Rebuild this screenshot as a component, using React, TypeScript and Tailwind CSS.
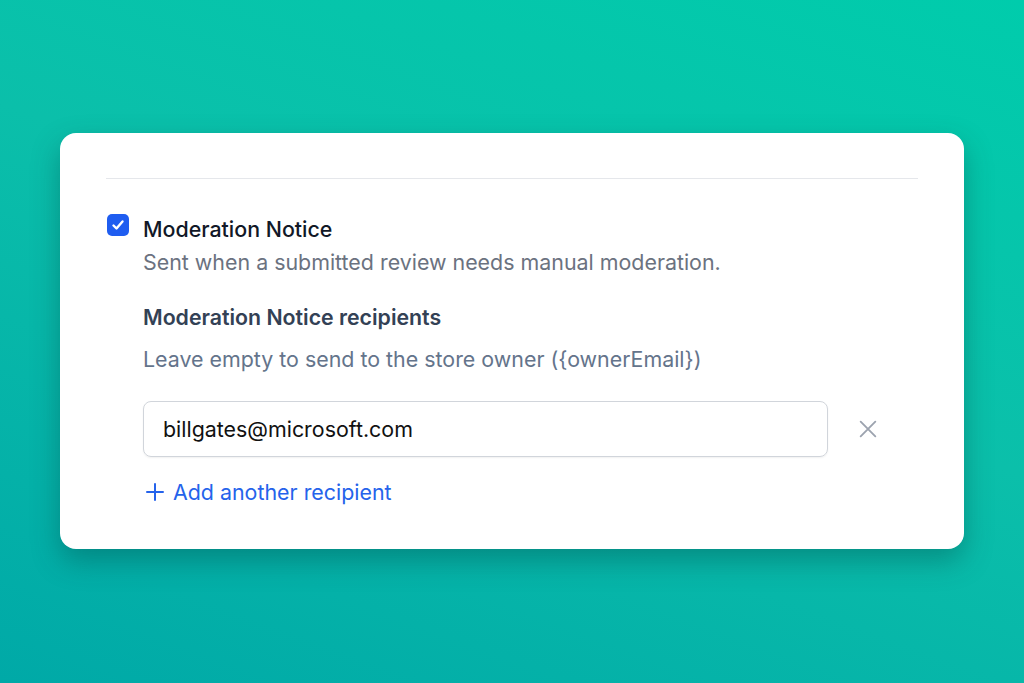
import React from "react";

export default function App() {
  return (
    <div
      className="w-[1024px] h-[683px] overflow-hidden pt-[133px] pl-[60px] bg-[linear-gradient(200deg,#00ccac_0%,#0bbfaa_45%,#00a9a7_100%)]"
      style={{ fontFamily: "Inter, 'Noto Sans', sans-serif" }}
    >
      <div className="w-[904px] bg-white rounded-[16px] shadow-[0_12px_28px_rgba(0,60,60,0.35)] px-[46px] pt-[45px] pb-[42px]">
        <div className="border-t border-[#e5e7eb]" />
        <div className="mt-[35px] flex items-start">
          <div className="ml-[1px] w-[22px] h-[22px] rounded-[5px] bg-[#1f5df0] flex items-center justify-center shrink-0">
            <svg width="16" height="16" viewBox="0 0 16 16" fill="none">
              <path d="M3.5 8.5l3 3 6-7" stroke="white" strokeWidth="2.4" strokeLinecap="round" strokeLinejoin="round" />
            </svg>
          </div>
          <div className="ml-[14px] flex-1">
            <div className="text-[21.4px] leading-[30px] font-medium text-[#111827]">Moderation Notice</div>
            <div className="mt-[3px] text-[21.4px] leading-[30px] text-[#6b7280]">
              Sent when a submitted review needs manual moderation.
            </div>
            <div className="mt-[25px] text-[21.3px] leading-[30px] font-semibold text-[#334155]">
              Moderation Notice recipients
            </div>
            <div className="mt-[12px] text-[21.4px] leading-[30px] text-[#64748b]">
              Leave empty to send to the store owner ({"{ownerEmail}"})
            </div>
            <div className="mt-[27px] flex items-center">
              <div className="w-[685px] h-[56px] rounded-[8px] border border-[#d1d5db] shadow-[0_1px_2px_rgba(0,0,0,0.06)] flex items-center px-[19px] text-[21.4px] text-[#111111]">
                billgates@microsoft.com
              </div>
              <button className="ml-[20px] w-[40px] h-[40px] flex items-center justify-center text-[#9ca3af]">
                <svg width="22" height="22" viewBox="0 0 24 24" fill="none" stroke="currentColor" strokeWidth="2" strokeLinecap="round">
                  <path d="M4 4l16 16M20 4L4 20" />
                </svg>
              </button>
            </div>
            <div className="mt-[20px] flex items-center text-[#2563eb] text-[21.4px] leading-[30px]">
              <svg width="20" height="20" viewBox="0 0 20 20" fill="none" stroke="currentColor" strokeWidth="2" strokeLinecap="round" className="ml-[2px]">
                <path d="M10 2v16M2 10h16" />
              </svg>
              <span className="ml-[8px]">Add another recipient</span>
            </div>
          </div>
        </div>
      </div>
    </div>
  );
}
